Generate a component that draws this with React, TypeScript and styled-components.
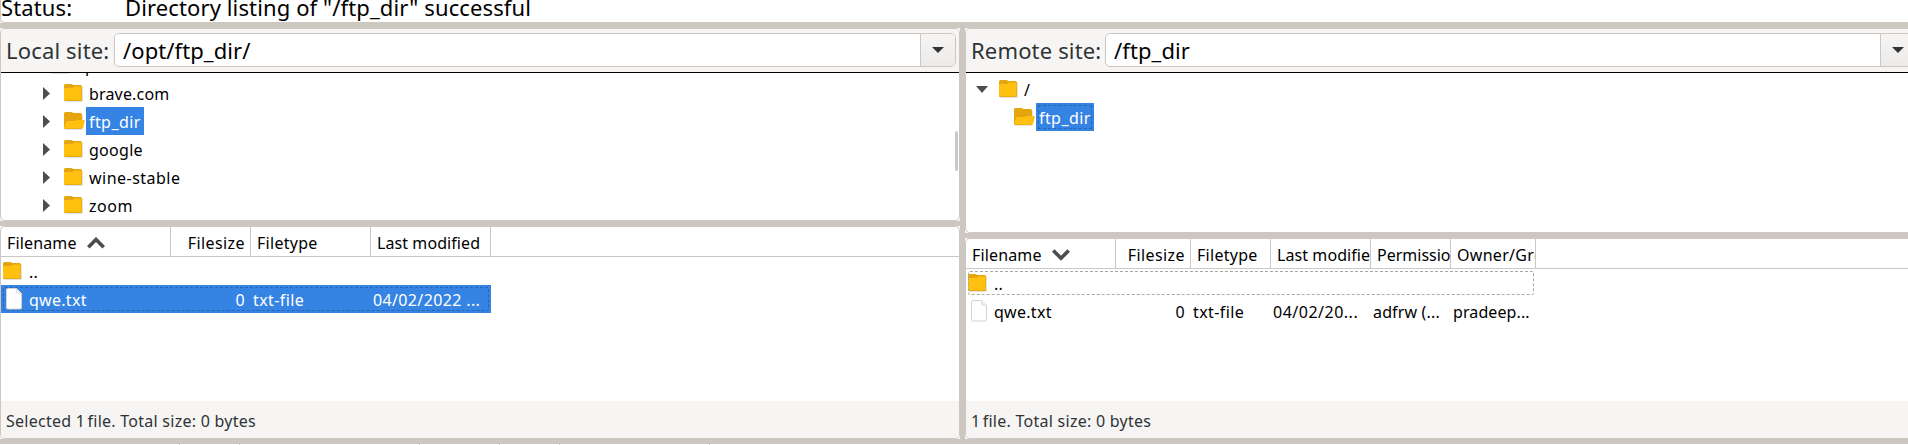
import React from 'react';
import styled, { createGlobalStyle, css } from 'styled-components';

const Global = createGlobalStyle`
  * { box-sizing: border-box; }
  body { margin: 0; background: #fff; overflow: hidden; }
`;
const grey = '#cdc7c2';
const chrome = '#f6f5f4';

const Window = styled.div`
  width: 1908px; height: 445px; overflow: hidden;
  display: flex; flex-direction: column;
  background: ${grey};
  font-family: "Noto Sans", sans-serif; font-size: 16px; color: #000; white-space: pre;
`;
const LogFrame = styled.div`height: 23px; flex: none; background: ${chrome};`;
const Log = styled.div`
  height: 23px; background: #fff; display: flex; align-items: flex-end;
  border-left: 1px solid ${grey}; border-bottom: 1px solid ${grey}; border-bottom-left-radius: 5px;
  font-size: 22px; line-height: 30px; letter-spacing: 0.12px; overflow: hidden;
`;
const LogType = styled.span`width: 124px; flex: none;`;
const Panes = styled.div`display: flex; gap: 5px; height: 411px; margin-top: 5px; flex: none;`;
const Side = styled.div<{ $w: number }>`
  width: ${p => p.$w}px; flex: none; display: flex; flex-direction: column; gap: 5px;
`;
const Frame = styled.div<{ $h: number }>`
  height: ${p => p.$h}px; flex: none; background: ${chrome};
`;
const Panel = styled.div`
  height: 100%; display: flex; flex-direction: column; position: relative;
  background: #fff; border: 1px solid ${grey}; border-radius: 5px; overflow: hidden;
`;
const SiteBar = styled.div`
  height: 44px; flex: none; display: flex; align-items: center; background: ${chrome};
  border-bottom: 1px solid #000; padding: 0 3px 1px 5px;
  font-size: 22px; color: #2e3436; letter-spacing: 0.16px;
`;
const SiteLabel = styled.span<{ $w: number }>`width: ${p => p.$w}px; flex: none; line-height: 34px;`;
const Combo = styled.div`
  flex: 1; height: 34px; display: flex; border: 1px solid ${grey}; border-radius: 5px;
  background: #fff; color: #000; overflow: hidden; letter-spacing: 0.08px;
`;
const ComboText = styled.span`flex: 1; padding-left: 8px; line-height: 32px;`;
const ComboButton = styled.span`
  width: 35px; border-left: 1px solid ${grey}; display: flex; align-items: center; justify-content: center;
  background: linear-gradient(#f6f5f4, #edebe9);
`;
const Tree = styled.div<{ $offset: number }>`
  flex: 1; overflow: hidden; display: flex; flex-direction: column;
  > :first-child { margin-top: ${p => p.$offset}px; }
`;
const Node = styled.div<{ $left: number }>`
  height: 28px; flex: none; display: flex; align-items: center; padding-left: ${p => p.$left}px;
`;
const Arrow = styled.svg<{ $gap: number }>`flex: none; margin: 1px ${p => p.$gap}px 0 0;`;
const Glyph = styled.svg`flex: none; display: block;`;
const NodeName = styled.span<{ $on?: boolean; $focus?: boolean; $track?: number }>`
  height: 28px; line-height: 30px; padding: 0 3px; margin-left: 1px; letter-spacing: ${p => p.$track ?? 0.3}px;
  ${p => p.$on && css`background: #3584e4; color: #fff;`}
  ${p => p.$focus && css`outline: 1px dashed #2766b4; outline-offset: -3px;`}
`;
const Thumb = styled.div`
  position: absolute; right: 1px; top: 102px; width: 3px; height: 40px; border-radius: 2px; background: #c8c9c9;
`;
const Header = styled.div`height: 30px; flex: none; display: flex; border-bottom: 1px solid ${grey};`;
const HeadCell = styled.div<{ $w: number; $right?: boolean; $track?: number }>`
  width: ${p => p.$w}px; flex: none; overflow: hidden; border-right: 1px solid ${grey};
  display: flex; line-height: 33px; height: 29px; letter-spacing: ${p => p.$track ?? 0}px;
  ${p => p.$right ? css`justify-content: flex-end; padding-right: 5px;` : css`padding-left: 6px;`}
`;
const Row = styled.div<{ $w: number; $on?: boolean; $focus?: string }>`
  width: ${p => p.$w}px; height: 28px; flex: none; display: flex; line-height: 30px;
  ${p => p.$on && css`background: #3584e4; color: #fff;`}
  ${p => p.$focus && css`
    position: relative;
    &::after { content: ''; position: absolute; inset: 2px; border: 1px dashed ${p.$focus}; border-radius: 2px; }
  `}
`;
const Cell = styled.div<{ $w: number; $right?: boolean; $track?: number }>`
  width: ${p => p.$w}px; flex: none; padding-left: 2px; display: flex; letter-spacing: ${p => p.$track ?? 0.28}px;
  ${p => p.$right && css`justify-content: flex-end; padding-right: 6px;`}
  > svg { margin: auto 0; }
`;
const FileName = styled.span<{ $gap?: number }>`margin-left: ${p => p.$gap ?? 6}px;`;
const Footer = styled.div<{ $left: number }>`
  margin-top: auto; height: 37px; flex: none; background: ${chrome}; color: #2e3436;
  padding-left: ${p => p.$left}px; line-height: 40px; letter-spacing: 0.26px;
`;
const Tight = styled.span`letter-spacing: -0.8px;`;
const QueueEdge = styled.div`
  height: 1px; margin-top: 5px; flex: none; background: #fff; display: flex; padding-left: 179px;
`;
const Tick = styled.span<{ $gap: number }>`
  width: ${p => p.$gap}px; flex: none; border-left: 1px solid ${grey};
`;
const SortSvg = styled.svg`flex: none; margin: 10px 0 0 10px;`;

const Collapsed = () => <Arrow $gap={14} width="7" height="13" viewBox="0 0 7 13"><path d="M0 0L7 6.5L0 13Z" fill="#4d4d4d" /></Arrow>;
const Expanded = () => <Arrow $gap={11} width="12" height="7" viewBox="0 0 12 7"><path d="M0 0H12L6 7Z" fill="#4d4d4d" /></Arrow>;
const ComboArrow = () => <svg width="12" height="6" viewBox="0 0 12 6"><path d="M0 0H12L6 6Z" fill="#2e3436" /></svg>;

const Folder = ({ open = false }: { open?: boolean }) => (
  <Glyph width="21" height="18" viewBox="0 0 21 18">
    <path d="M1 2H17Q19 2 19 3.5V18H1Z" fill="#e4e4e6" />
    <path d="M0 1.5Q0 0 1.5 0H7.5L9.5 1H16.5Q18 1 18 2.5V16Q18 17 17 17H1Q0 17 0 16Z" fill="#e5a50f" />
    {open
      ? <path d="M3.5 9H11L13 8H20Q21 8 20.8 9L19.2 15.5Q18.8 16.4 17.5 16.4H1L0 15.5L2 10Q2.4 9 3.5 9Z" fill="#ffc00f" />
      : <path d="M0 4H8L10.5 2.5H17.4V15.5Q17.4 16.2 16.5 16.2H1L0 15.5Z" fill="#ffc00f" />}
  </Glyph>
);
const Doc = () => (
  <Glyph width="20" height="22" viewBox="0 0 20 22">
    <path d="M3.5 2Q3.5 .5 5 .5H13.5L18.5 5.5V19.5Q18.5 21 17 21H5Q3.5 21 3.5 19.5Z" fill="#fff" stroke="#d2d2d2" />
    <path d="M13.5 .5V4Q13.5 5.5 15 5.5H18.5" fill="#eee" stroke="#ddd" strokeWidth=".8" />
  </Glyph>
);
const Sort = ({ up = false }: { up?: boolean }) => (
  <SortSvg width="18" height="12" viewBox="0 0 18 12"><path d={up ? 'M1.3 10.3L9 2.5L16.7 10.3' : 'M1.3 1.5L9 9.3L16.7 1.5'} fill="none" stroke="#4d4d4d" strokeWidth="3.6" /></SortSvg>
);

const localDirs = [
  { name: 'brave.com', track: 0.17 },
  { name: 'ftp_dir', track: 0.42 },
  { name: 'google', track: 0.28 },
  { name: 'wine-stable', track: 0.48 },
  { name: 'zoom', track: 0.5 },
];

export default function App() {
  return (
    <Window>
      <Global />
      <LogFrame><Log><LogType>Status:</LogType><span>Directory listing of "/ftp_dir" successful</span></Log></LogFrame>
      <Panes>
        <Side $w={960}>
          <Frame $h={193}><Panel>
            <SiteBar>
              <SiteLabel $w={108}>Local site:</SiteLabel>
              <Combo><ComboText>/opt/ftp_dir/</ComboText><ComboButton><ComboArrow /></ComboButton></Combo>
            </SiteBar>
            <Tree $offset={-22}>
              <Node $left={49}><Folder /><NodeName>opt</NodeName></Node>
              {localDirs.map(d => (
                <Node key={d.name} $left={42}>
                  <Collapsed /><Folder open={d.name === 'ftp_dir'} />
                  <NodeName $on={d.name === 'ftp_dir'} $track={d.track}>{d.name}</NodeName>
                </Node>
              ))}
            </Tree>
            <Thumb />
          </Panel></Frame>
          <Frame $h={213}><Panel>
            <Header>
              <HeadCell $w={170} $track={0.15}>Filename<Sort up /></HeadCell>
              <HeadCell $w={80} $right $track={0.42}>Filesize</HeadCell>
              <HeadCell $w={120} $track={0.28}>Filetype</HeadCell>
              <HeadCell $w={120} $track={0.08}>Last modified</HeadCell>
            </Header>
            <Row $w={490}><Cell $w={170}><Folder /><FileName $gap={5}>..</FileName></Cell></Row>
            <Row $w={490} $on $focus="#2766b4">
              <Cell $w={170}><Doc /><FileName>qwe.txt</FileName></Cell>
              <Cell $w={80} $right>0</Cell><Cell $w={120} $track={0.4}>txt-file</Cell><Cell $w={120} $track={0.36}>04/02/2022 ...</Cell>
            </Row>
            <Footer $left={5}>Selected <Tight>1 </Tight>file. Total size: 0 bytes</Footer>
          </Panel></Frame>
        </Side>
        <Side $w={955}>
          <Frame $h={205}><Panel>
            <SiteBar>
              <SiteLabel $w={134}>Remote site:</SiteLabel>
              <Combo><ComboText>/ftp_dir</ComboText><ComboButton><ComboArrow /></ComboButton></Combo>
            </SiteBar>
            <Tree $offset={2}>
              <Node $left={10}><Expanded /><Folder /><NodeName>/</NodeName></Node>
              <Node $left={48}><Folder open /><NodeName $on $focus $track={0.42}>ftp_dir</NodeName></Node>
            </Tree>
          </Panel></Frame>
          <Frame $h={201}><Panel>
            <Header>
              <HeadCell $w={150} $track={0.15}>Filename<Sort /></HeadCell>
              <HeadCell $w={75} $right $track={0.42}>Filesize</HeadCell>
              <HeadCell $w={80} $track={0.28}>Filetype</HeadCell>
              <HeadCell $w={100} $track={0.08}>Last modified</HeadCell>
              <HeadCell $w={80}>Permissions</HeadCell>
              <HeadCell $w={85} $track={0.3}>Owner/Group</HeadCell>
            </Header>
            <Row $w={570} $focus="#a8a8a8"><Cell $w={150}><Folder /><FileName $gap={5}>..</FileName></Cell></Row>
            <Row $w={570}>
              <Cell $w={150}><Doc /><FileName>qwe.txt</FileName></Cell>
              <Cell $w={75} $right>0</Cell><Cell $w={80} $track={0.4}>txt-file</Cell><Cell $w={100} $track={0.5}>04/02/20...</Cell>
              <Cell $w={80} $track={0.15}>adfrw (...</Cell><Cell $w={85} $track={0.1}>pradeep...</Cell>
            </Row>
            <Footer $left={5}><Tight>1 </Tight>file. Total size: 0 bytes</Footer>
          </Panel></Frame>
        </Side>
      </Panes>
      <QueueEdge><Tick $gap={60} /><Tick $gap={180} /><Tick $gap={80} /><Tick $gap={60} /><Tick $gap={150} /><Tick $gap={1} /></QueueEdge>
    </Window>
  );
}
